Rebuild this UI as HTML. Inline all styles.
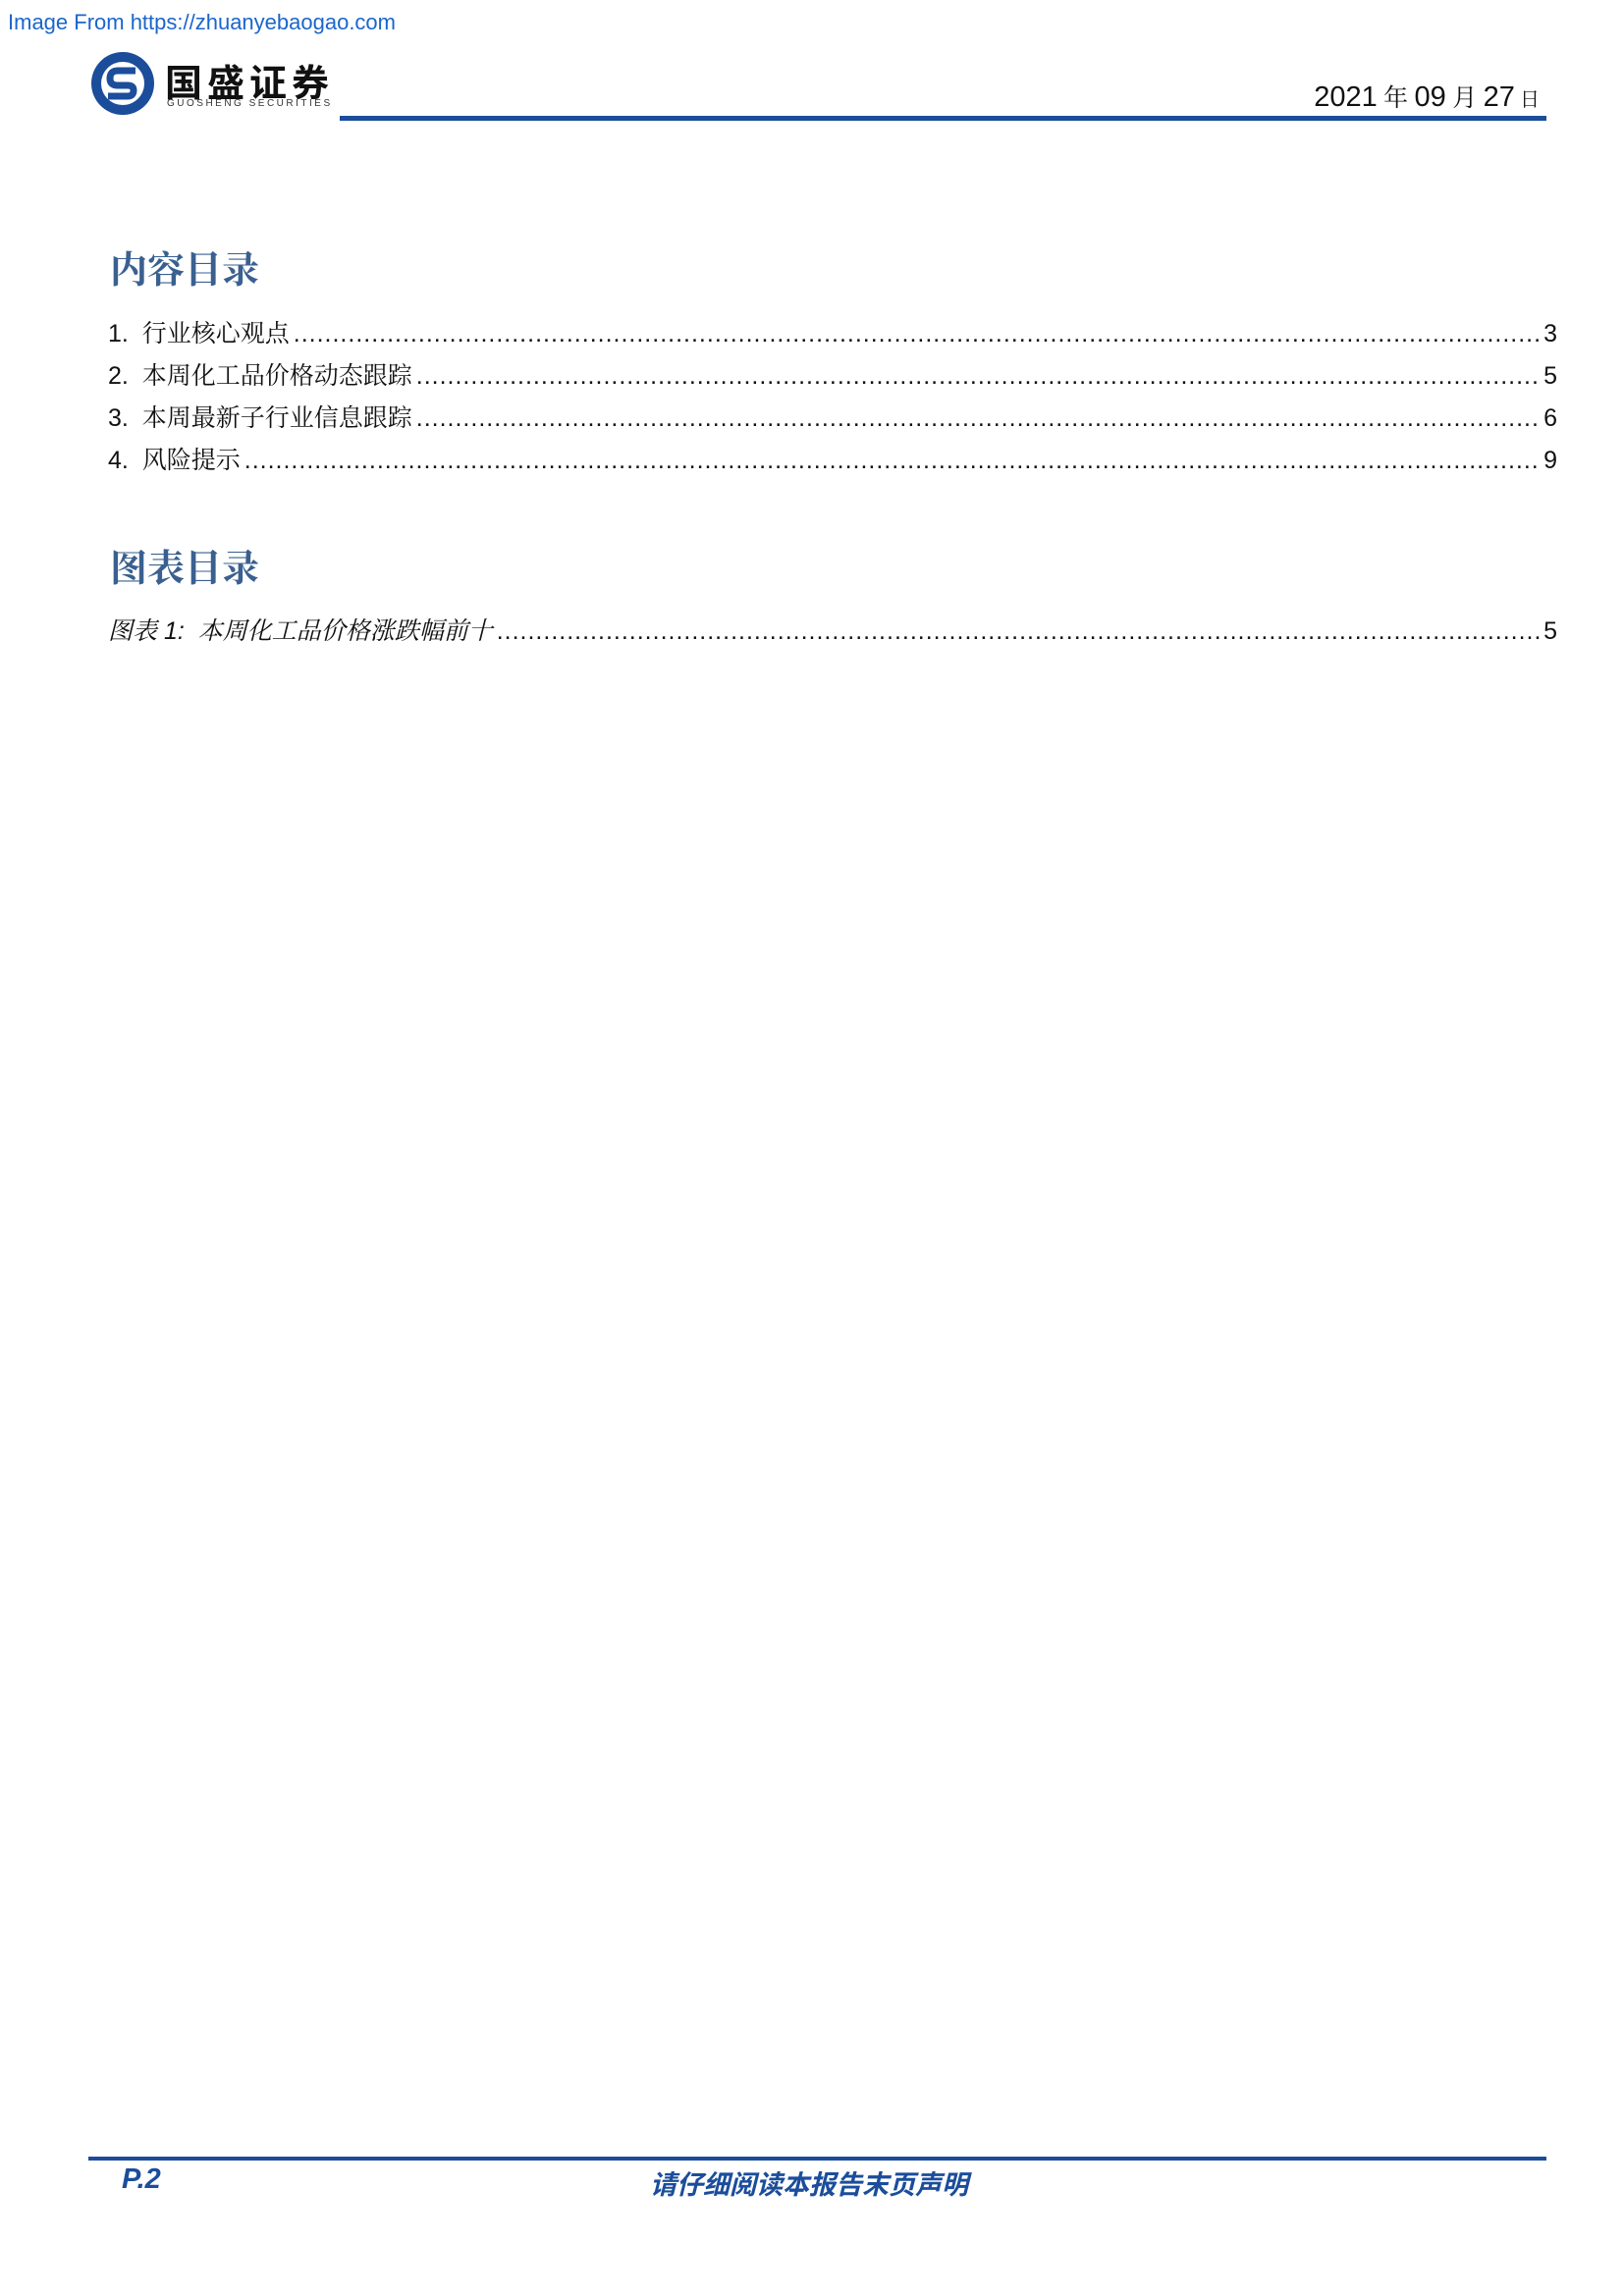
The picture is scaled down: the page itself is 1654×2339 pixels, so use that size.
<!DOCTYPE html>
<html><head><meta charset="utf-8"><style>
body{margin:0;width:1654px;height:2339px;background:#fff;position:relative;overflow:hidden;font-family:"Liberation Sans","Noto Sans CJK SC",sans-serif}
.a{position:absolute;white-space:nowrap}
.toc{position:absolute;left:110px;width:1476px;display:flex;align-items:baseline;font-size:25px;color:#111;font-family:"Liberation Sans","Noto Serif CJK SC",serif}
.toc .d{flex:1;overflow:hidden;margin:0 4px;letter-spacing:1px}
.toc .d::after{content:"......................................................................................................................................................................................................................................................................................................"}
h2{position:absolute;left:112px;margin:0;font-size:38px;color:#3a6090;font-weight:bold;font-family:"Noto Serif CJK SC",serif}
</style></head><body>
<div class="a" style="left:8px;top:10px;font-size:22px;color:#1a66cc">Image From https://zhuanyebaogao.com</div>
<svg class="a" style="left:92px;top:52px" width="66" height="66" viewBox="0 0 66 66"><circle cx="33" cy="33" r="32" fill="#1b4d9b"/><circle cx="33" cy="33" r="22" fill="#fff"/><path d="M46 20 H28 Q20 20 20 28 Q20 35 28 35 H38 Q44 35 44 40 Q44 46 38 46 H18" stroke="#1b4d9b" stroke-width="7" fill="none"/></svg>
<div class="a" style="left:168px;top:54px;font-size:38px;font-weight:bold;color:#111;font-family:'Noto Sans CJK SC',sans-serif;letter-spacing:5px">国盛证券</div>
<div class="a" style="left:170px;top:100px;font-size:10px;color:#333;letter-spacing:2.5px">GUOSHENG SECURITIES</div>
<div class="a" style="left:346px;top:118px;width:1229px;height:5px;background:#1b4d9b"></div>
<div class="a" style="right:86px;top:80px;font-size:29px;color:#111">2021<span style="font-size:25px;font-family:'Noto Serif CJK SC',serif"> 年 </span>09<span style="font-size:25px;font-family:'Noto Serif CJK SC',serif"> 月 </span>27<span style="font-size:20px;font-family:'Noto Serif CJK SC',serif"> 日</span></div>
<h2 style="top:244px">内容目录</h2>
<div class="toc" style="top:320px"><span>1.&nbsp; 行业核心观点</span><span class="d"></span><span>3</span></div>
<div class="toc" style="top:363px"><span>2.&nbsp; 本周化工品价格动态跟踪</span><span class="d"></span><span>5</span></div>
<div class="toc" style="top:406px"><span>3.&nbsp; 本周最新子行业信息跟踪</span><span class="d"></span><span>6</span></div>
<div class="toc" style="top:449px"><span>4.&nbsp; 风险提示</span><span class="d"></span><span>9</span></div>
<h2 style="top:548px">图表目录</h2>
<div class="toc" style="top:623px"><span style="font-style:italic">图表 1:&nbsp; 本周化工品价格涨跌幅前十</span><span class="d"></span><span>5</span></div>
<div class="a" style="left:90px;top:2197px;width:1485px;height:4px;background:#1b4d9b"></div>
<div class="a" style="left:124px;top:2204px;font-size:29px;font-weight:bold;font-style:italic;color:#1b4d9b">P.2</div>
<div class="a" style="left:662px;top:2204px;font-size:27px;font-weight:bold;font-style:italic;color:#1b4d9b;font-family:'Noto Sans CJK SC',sans-serif">请仔细阅读本报告末页声明</div>
</body></html>
